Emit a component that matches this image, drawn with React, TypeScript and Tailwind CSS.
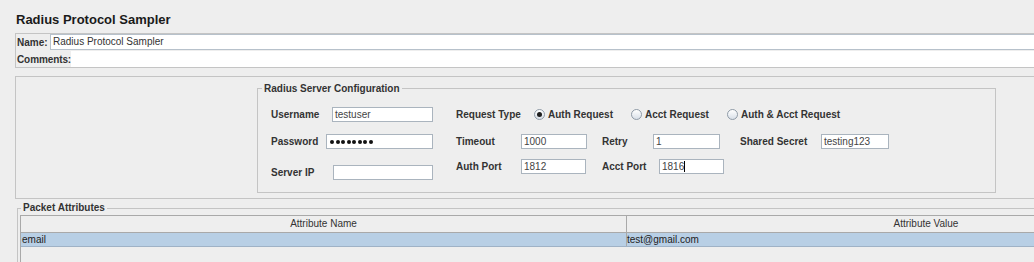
import type { ReactNode } from 'react'

function Field({ w, children, className = '' }: { w: string; children?: ReactNode; className?: string }) {
  return (
    <div className={`${w} h-[15px] shrink-0 bg-white border border-[#aab4be] pl-[2px] text-[10px] leading-[13px] text-[#444] overflow-hidden whitespace-nowrap ${className}`}>
      {children}
    </div>
  )
}

function Label({ w, children }: { w: string; children: ReactNode }) {
  return <div className={`${w} shrink-0 text-[10px] font-bold leading-[13px] text-[#333] whitespace-nowrap`}>{children}</div>
}

function Radio({ w, checked, label }: { w: string; checked?: boolean; label: string }) {
  return (
    <div className={`${w} shrink-0 flex items-center`}>
      <span className="w-[11px] h-[11px] rounded-full border border-[#8f9ba7] bg-linear-to-b from-white to-[#d9e0e8] flex items-center justify-center">
        {checked && <span className="w-[5px] h-[5px] rounded-full bg-[#1e1e1e]" />}
      </span>
      <span className="ml-[3px] text-[10px] font-bold leading-[13px] text-[#333] whitespace-nowrap">{label}</span>
    </div>
  )
}

// masked password, drawn as dots
function Dots({ n }: { n: number }) {
  return (
    <div className="flex h-full items-center gap-[1.5px] pl-[1px]">
      {Array.from({ length: n }).map((_, i) => (
        <span key={i} className="w-[4px] h-[4px] rounded-full bg-[#111]" />
      ))}
    </div>
  )
}

export default function App() {
  return (
    <div className="w-[1034px] h-[262px] overflow-hidden bg-[#eeeeee] font-['Liberation_Sans',Arial,sans-serif] text-[#222]">
      <div className="w-[1240px]">
        <h1 className="h-[33px] pl-[16px] pt-[12px] text-[13px] leading-[16px] font-bold text-[#1a1a1a]">Radius Protocol Sampler</h1>

        {/* name / comments */}
        <div className="ml-[15px] w-[1223px] border border-[#c4c4c4]">
          <div className="flex h-[16px] items-center">
            <div className="w-[34px] pl-[1px] text-[10px] font-bold leading-[13px] text-[#333]">Name:</div>
            <div className="flex-1 h-[16px] bg-white border border-[#b7c1cb] pl-[2px] text-[10px] leading-[14px] text-[#333]">Radius Protocol Sampler</div>
          </div>
          <div className="flex h-[16px] mt-[1px] items-center">
            <div className="w-[55px] pl-[1px] text-[10px] font-bold leading-[13px] text-[#333] whitespace-nowrap tracking-[-0.1px]">Comments:</div>
            <div className="flex-1 h-[16px] bg-white" />
          </div>
        </div>

        {/* server config */}
        <div className="mt-[8px] ml-[15px] w-[1223px] h-[123px] border border-[#c4c4c4] pl-[241px] pt-[11px]">
          <div className="relative w-[739px] h-[105px] border border-[#c4c4c4]">
            <div className="absolute -top-[7px] left-[4px] bg-[#eeeeee] px-[2px] text-[10px] font-bold leading-[14px] text-[#333]">Radius Server Configuration</div>
            <div className="pt-[18px] pl-[13px]">
              <div className="flex h-[15px] items-center">
                <Label w="w-[61px]">Username</Label>
                <Field w="w-[101px]">testuser</Field>
                <div className="w-[23px] shrink-0" />
                <Label w="w-[78px]">Request Type</Label>
                <Radio w="w-[97px]" checked label="Auth Request" />
                <Radio w="w-[96px]" label="Acct Request" />
                <Radio w="w-[130px]" label="Auth & Acct Request" />
              </div>
              <div className="flex h-[15px] items-center mt-[12px]">
                <Label w="w-[55px]">Password</Label>
                <Field w="w-[107px]">
                  <Dots n={8} />
                </Field>
                <div className="w-[23px] shrink-0" />
                <Label w="w-[65px]">Timeout</Label>
                <Field w="w-[66px]">1000</Field>
                <div className="w-[15px] shrink-0" />
                <Label w="w-[51px]">Retry</Label>
                <Field w="w-[67px]">1</Field>
                <div className="w-[20px] shrink-0" />
                <Label w="w-[81px]">Shared Secret</Label>
                <Field w="w-[68px]">testing123</Field>
              </div>
              <div className="flex items-start mt-[10px]">
                <div className="flex h-[15px] items-center mt-[6px]">
                  <Label w="w-[62px]">Server IP</Label>
                  <Field w="w-[100px]" />
                </div>
                <div className="w-[23px] shrink-0" />
                <div className="flex h-[15px] items-center">
                  <Label w="w-[65px]">Auth Port</Label>
                  <Field w="w-[65px]">1812</Field>
                  <div className="w-[16px] shrink-0" />
                  <Label w="w-[57px]">Acct Port</Label>
                  <Field w="w-[65px]">
                    1816<span className="inline-block w-px h-[11px] bg-black align-middle -mt-[1px]" />
                  </Field>
                </div>
              </div>
            </div>
          </div>
        </div>

        {/* packet attributes */}
        <div className="relative mt-[9px] ml-[17px] w-[1223px] h-[60px] border-t border-l border-[#c4c4c4] pl-[2px] pt-[6px]">
          <div className="absolute -top-[8px] left-[3px] bg-[#eeeeee] px-[2px] text-[10px] font-bold leading-[14px] text-[#333]">Packet Attributes</div>
          <div className="w-[1205px] h-[60px] border-l border-t border-[#a9a9a9]">
            <div className="flex h-[17px] border-b border-[#a9a9a9] text-[10px] leading-[16px] text-[#333]">
              <div className="w-[606px] border-r border-[#a9a9a9] text-center">Attribute Name</div>
              <div className="flex-1 text-center">Attribute Value</div>
            </div>
            <div className="flex h-[14px] bg-[#b8cfe5] border-b border-[#9fb2c6] text-[10px] leading-[13px] text-[#222]">
              <div className="w-[606px] border-r border-[#a9a9a9] pl-[1px]">email</div>
              <div className="flex-1">test@gmail.com</div>
            </div>
          </div>
        </div>
      </div>
    </div>
  )
}
